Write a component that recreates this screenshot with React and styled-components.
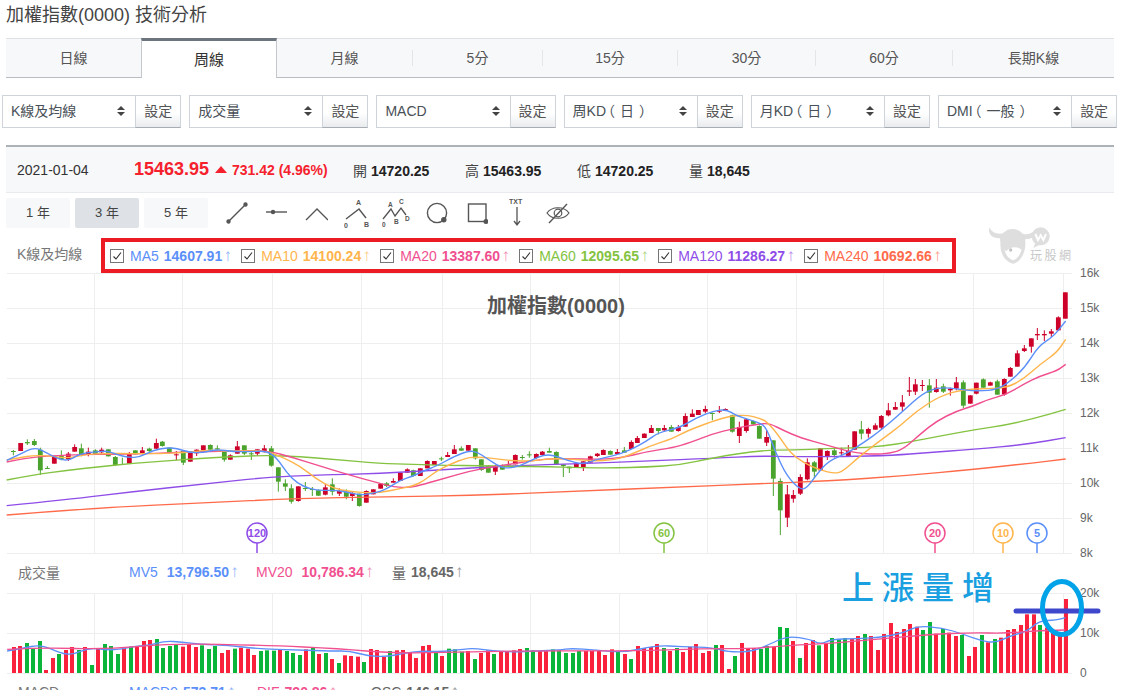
import React from 'react'
import styled, { createGlobalStyle } from 'styled-components'

const GlobalStyle = createGlobalStyle`
  html, body { margin: 0; padding: 0; background: #fff; }
  body { font-family: "Liberation Sans", "Noto Sans CJK TC", sans-serif; color: #444; }
`

const MA = { 5: '#5b8ff9', 10: '#ffb54c', 20: '#f0508f', 60: '#84c341', 120: '#8f4de8', 240: '#ff6b4a' }

const Page = styled.div`
  position: relative;
  width: 1121px;
  height: 690px;
  overflow: hidden;
`

const Title = styled.h1`
  margin: 0;
  height: 38px;
  padding: 2px 0 0 6px;
  box-sizing: border-box;
  font-size: 18px;
  line-height: 26px;
  font-weight: 400;
  color: #444;
`

const Tabs = styled.div`
  display: grid;
  grid-template-columns: 135px 136px 136px 130px 135px 138px 137px 161px;
  margin-left: 6px;
  width: 1108px;
  height: 40px;
`

const Tab = styled.div`
  display: flex;
  align-items: center;
  box-sizing: border-box;
  font-size: ${p => (p.$active ? '15px' : '14px')};
  padding-top: ${p => (p.$active ? '1px' : '0')};
  font-weight: 400;
  color: ${p => (p.$active ? '#333' : '#555')};
  background: ${p => (p.$active ? '#fff' : '#f7f8fa')};
  border-top: ${p => (p.$active ? '3px solid #6c757d' : '1px solid #dee2e6')};
  border-bottom: ${p => (p.$active ? '0' : '1px solid #b9bdc2')};
  border-left: ${p => (p.$active ? '1px solid #c4c8cc' : '0')};
  border-right: ${p => (p.$active ? '1px solid #c4c8cc' : '0')};
`

const TabLabel = styled.span`
  flex: 1;
  height: 16px;
  line-height: 16px;
  text-align: center;
  border-right: ${p => (p.$sep ? '1px solid #e4e6e9' : '0')};
`

const Selects = styled.div`
  display: grid;
  grid-template-columns: repeat(6, 179.2px);
  column-gap: 8px;
  margin: 17px 0 0 2px;
`

const SelectGroup = styled.div`
  display: flex;
  height: 33px;
  box-sizing: border-box;
  font-size: 14px;
  line-height: 14px;
  color: #495057;
`

const SelectBox = styled.div`
  flex: 1;
  display: flex;
  align-items: center;
  justify-content: space-between;
  box-sizing: border-box;
  padding: 0 10px 1px 8px;
  white-space: nowrap;
  border: 1px solid #ced4da;
  border-right: 0;
`

const Paren = styled.span`
  margin-left: ${p => (p.$open ? '-5px' : '5px')};
  margin-right: ${p => (p.$open ? '5px' : '-5px')};
`

const SetButton = styled.div`
  width: 46px;
  display: flex;
  align-items: center;
  justify-content: center;
  box-sizing: border-box;
  padding-bottom: 1px;
  color: #555;
  border: 1px solid #ced4da;
  border-bottom-color: #a8adb3;
  background: linear-gradient(#fff 55%, #e9ebee);
`

const Updown = styled.span`
  display: flex;
  flex-direction: column;
  gap: 2px;
  &::before, &::after {
    content: "";
    border-left: 4px solid transparent;
    border-right: 4px solid transparent;
  }
  &::before { border-bottom: 4px solid #444; }
  &::after { border-top: 4px solid #444; }
`

const InfoBar = styled.div`
  display: flex;
  align-items: center;
  margin: 17px 0 0 6px;
  width: 1108px;
  height: 48px;
  box-sizing: border-box;
  padding-left: 11px;
  background: #f7f8fa;
  border-top: 2px solid #adb2b8;
  border-bottom: 1px solid #e8eaed;
  font-size: 13px;
  color: #333;
`

const DateText = styled.span`
  width: 117px;
  font-size: 14px;
`

const Price = styled.span`
  font-size: 18px;
  font-weight: 700;
  color: #f5222d;
  width: 81px;
`

const UpTriangle = styled.span`
  width: 0;
  height: 0;
  margin-right: 5px;
  border-left: 6px solid transparent;
  border-right: 6px solid transparent;
  border-bottom: 7px solid #f5222d;
`

const Delta = styled.span`
  width: 121px;
  font-size: 14px;
  font-weight: 700;
  color: #f5222d;
`

const Stat = styled.span`
  width: 112px;
  font-size: 14px;
  color: #444;
  b { color: #222; margin-left: 4px; }
`

const ToolRow = styled.div`
  display: flex;
  align-items: center;
  height: 30px;
  margin: 5px 0 0 6px;
`

const YearButton = styled.div`
  width: 64px;
  height: 30px;
  margin-right: 5px;
  line-height: 30px;
  text-align: center;
  border-radius: 2px;
  font-size: 13px;
  color: #444;
  background: ${p => (p.$active ? '#dee2e6' : '#f7f8fa')};
`

const ToolIcons = styled.div`
  display: flex;
  margin-left: 13px;
`

const ToolSvg = styled.svg`
  display: block;
  width: ${p => p.$w}px;
  height: 30px;
  margin-right: ${p => p.$gap}px;
  fill: none;
  stroke: #555;
  stroke-width: 1.4;
`

const LegendRow = styled.div`
  display: flex;
  margin-top: 10px;
  height: 35px;
`

const RowLabel = styled.div`
  width: 101px;
  padding-left: 17px;
  box-sizing: border-box;
  font-size: 14px;
  line-height: 32px;
  color: #777;
`

const RedBox = styled.div`
  display: flex;
  align-items: center;
  gap: 9px;
  width: 855px;
  box-sizing: border-box;
  padding-left: 5px;
  border: 4px solid #ed1c24;
`

const Item = styled.span`
  display: inline-flex;
  align-items: center;
  font-size: 14px;
  white-space: nowrap;
  color: ${p => p.$c};
  b { margin-left: 5px; }
`

const Arrow = styled.i`
  display: inline-block;
  width: 9px;
  margin-left: 1px;
  font-style: normal;
  font-size: 17px;
  line-height: 14px;
  text-align: center;
  opacity: .65;
`

const Check = styled.span`
  display: inline-flex;
  width: 14px;
  height: 14px;
  margin-right: 6px;
  box-sizing: border-box;
  border: 1px solid #767676;
  background: #fff;
  svg { width: 12px; height: 12px; fill: none; stroke: #333; stroke-width: 1.1; }
`

const Watermark = styled.svg`
  position: absolute;
  left: 980px;
  top: 218px;
  width: 100px;
  height: 54px;
`

const WatermarkText = styled.span`
  position: absolute;
  left: 1030px;
  top: 249px;
  font-size: 12px;
  line-height: 14px;
  letter-spacing: 2.5px;
  color: #c8c8c8;
`

const ChartSvg = styled.svg`
  display: block;
  overflow: visible;
  font-family: "Liberation Sans", "Noto Sans CJK TC", sans-serif;
`

const PaneHeader = styled.div`
  display: flex;
  align-items: center;
  box-sizing: border-box;
  height: 40px;
  padding-bottom: 2px;
  font-size: 14px;
`

const PaneName = styled.div`
  width: 129px;
  padding-left: 18px;
  box-sizing: border-box;
  color: #777;
`

const PaneItem = styled(Item)`
  width: ${p => p.$w}px;
  b { margin-left: ${p => p.$gap || 5}px; }
`

const Annotation = styled.div`
  position: absolute;
  left: 842px;
  top: 565px;
  font-family: "Noto Sans CJK TC", sans-serif;
  font-weight: 500;
  font-size: 32px;
  line-height: 40px;
  letter-spacing: 8px;
  color: #1a9fe0;
`

const Marks = styled.svg`
  position: absolute;
  left: 1005px;
  top: 570px;
  width: 104px;
  height: 76px;
  fill: none;
`

// 圖上的座標：x 線性換算，y 用畫面像素
const candleSets = [
  { ox: 0, oy: 400, rows: `g 40 147 150 151 163|r 62 126 126 150 150|g 82 115 123 127 132|g 103 114 120 132 135|g 121 140 146 208 222|g 142 195 201 202 203|r 163 165 165 188 188|g 184 148 162 175 178|r 205 153 158 174 180|r 224 130 138 152 152|g 244 128 142 160 166|r 265 140 152 162 166|g 286 145 148 160 162|r 305 140 146 154 158|g 325 145 145 166 166|g 346 165 168 192 195|g 367 170 189 190 192|r 388 153 158 188 189|g 406 148 148 160 160|r 427 138 148 158 160|g 448 140 143 150 155|r 469 113 126 143 144|g 487 120 122 135 137|g 508 140 140 155 158|r 529 150 160 161 178|g 550 150 150 185 192|r 571 155 155 182 182|r 590 145 146 157 165|r 610 133 133 148 148|g 631 130 132 146 150|g 652 133 142 143 150|g 673 150 153 176 182|r 691 160 163 176 176|r 712 120 136 158 158|g 733 133 133 158 162|g 754 150 157 159 177|r 772 145 145 158 165|r 793 132 142 150 155|g 814 135 142 194 197|g 835 199 199 242 272|g 856 235 247 257 270|g 874 250 262 302 308|r 895 256 256 300 302|g 916 243 261 263 270|g 937 258 264 266 285|g 955 265 268 284 285|r 976 248 259 281 283|g 997 232 250 272 283|r 1018 262 270 278 285|g 1039 265 273 287 295|r 1057 272 276 285 300|g 1078 278 278 315 317|r 1099 268 270 305 305|r 1120 265 265 280 280` },
  { ox: 380, oy: 380, rows: `r 2 308 308 323 323|g 20 303 307 315 318|r 40 292 300 305 305|r 61 275 275 300 300|r 82 262 265 275 275|g 100 266 268 285 287|r 121 262 262 285 285|r 142 238 240 262 262|r 163 240 240 252 252|g 184 227 232 234 240|r 203 213 222 228 228|r 223 192 205 219 219|g 244 196 202 209 209|r 265 192 192 209 209|g 286 202 202 232 236|g 304 235 235 267 270|g 325 252 255 275 275|r 346 252 255 272 282|g 367 250 253 266 266|r 385 240 250 252 258|r 406 220 222 250 250|g 427 222 228 230 236|g 448 211 220 222 230|r 469 217 219 231 233|r 487 210 212 222 222|g 508 200 210 215 215|g 529 211 213 250 250|g 550 250 250 255 288|g 568 257 257 262 276|r 589 247 247 258 258|r 610 241 241 258 270|r 631 224 226 245 245|r 652 216 218 225 228|r 670 205 207 222 222|g 691 208 210 221 221|r 712 204 213 219 219|g 733 198 208 215 215|r 754 178 183 204 204|r 772 165 171 186 186|r 793 157 158 171 171|r 814 132 141 156 156|g 835 141 141 150 160|r 853 132 141 148 152|g 874 132 138 152 152|r 895 132 138 150 152|r 916 97 105 137 137|r 937 85 98 108 108|r 955 87 87 102 102|r 976 74 84 92 97|g 997 95 96 98 118|r 1018 75 89 92 96|r 1036 82 84 90 90|g 1057 101 103 152 155|r 1078 122 138 165 186|r 1099 113 115 150 155|g 1120 118 120 130 132|g 1138 133 135 173 173` },
  { ox: 760, oy: 270, rows: `r 20 478 498 515 525|g 40 508 508 623 675|g 61 622 630 718 792|r 82 642 670 740 768|r 100 657 672 683 695|r 121 610 618 668 672|r 142 562 574 625 628|g 163 570 574 602 622|r 181 532 532 598 598|r 202 538 540 556 567|g 223 530 538 552 560|r 244 530 544 546 555|r 265 522 540 555 558|r 284 481 481 536 536|g 304 450 475 488 505|r 325 470 474 488 500|r 346 457 463 476 476|r 364 432 435 470 476|r 385 396 418 433 436|r 406 393 408 416 416|r 427 372 394 407 420|r 448 318 358 362 375|r 466 324 340 362 372|r 487 327 342 344 360|g 508 324 343 365 410|r 529 324 350 363 365|g 550 338 346 362 366|r 571 350 353 358 374|r 589 318 334 353 358|g 610 328 334 404 411|r 631 373 373 398 398|r 649 335 335 368 370|g 670 322 325 350 350|r 691 332 334 344 344|g 712 326 331 371 371|r 733 322 324 370 374|r 751 288 291 317 317|r 772 238 247 287 287|r 793 222 232 240 243|r 814 202 202 227 245|r 832 171 189 193 207|r 853 178 189 193 210|r 874 174 181 188 198|r 895 136 139 178 180|r 916 64 64 143 143` }
]

const candles = candleSets.flatMap(({ ox, oy, rows }) =>
  rows.split('|').map(row => {
    const [c, x, a, b, d, e] = row.split(' ')
    return {
      up: c === 'r',
      x: ox + x / 3,
      hi: oy + a / 3,
      top: oy + b / 3,
      bot: oy + d / 3,
      lo: oy + e / 3
    }
  })
)

const pts = (ox, oy, list, sx = 3) => list.map(([x, y]) => [ox + x / sx, oy + y / 3])

const priceLines = [
  { c: MA[240], p: [...pts(0, 400, [[20, 342], [300, 320], [600, 306], [900, 292], [1140, 288]]), ...pts(380, 380, [[300, 343], [600, 330], [900, 318], [1140, 308]]), ...pts(760, 270, [[200, 630], [430, 615], [640, 595], [800, 578], [917, 564]])] },
  { c: MA[120], p: [...pts(0, 400, [[20, 314], [200, 296], [400, 272], [600, 250], [800, 229], [950, 222], [1140, 218]]), ...pts(380, 380, [[200, 265], [400, 254], [600, 248], [800, 240], [1000, 232], [1140, 225]]), ...pts(760, 270, [[100, 557], [250, 557], [400, 553], [500, 545], [640, 535], [800, 520], [917, 500]])] },
  { c: MA[60], p: [...pts(0, 400, [[20, 237], [100, 222], [200, 208], [300, 197], [400, 187], [500, 180], [600, 172], [700, 167], [800, 163], [900, 167], [1000, 175], [1140, 187]]), ...pts(380, 380, [[100, 250], [200, 253], [300, 254], [400, 256], [500, 257], [600, 260], [700, 261], [800, 258], [900, 252], [1000, 230], [1140, 208]]), ...pts(760, 270, [[100, 537], [200, 533], [300, 530], [370, 525], [450, 513], [550, 493], [650, 475], [750, 460], [850, 435], [917, 415]])] },
  { c: MA[20], p: [...pts(0, 400, [[20, 183], [80, 170], [150, 165], [250, 160], [330, 160], [430, 158], [560, 153], [700, 150], [800, 148], [880, 170], [960, 195], [1040, 220], [1140, 247]]), ...pts(380, 380, [[40, 318], [90, 320], [130, 310], [200, 290], [270, 270], [340, 257], [420, 245], [500, 233], [570, 233], [640, 235], [720, 232], [800, 212], [880, 200], [930, 185], [1000, 158], [1060, 143], [1140, 128]]), ...pts(760, 270, [[30, 458], [70, 478], [120, 500], [200, 522], [280, 545], [340, 550], [390, 547], [430, 535], [480, 490], [530, 450], [590, 420], [640, 405], [680, 387], [740, 370], [790, 340], [840, 315], [890, 300], [917, 280]])] },
  { c: MA[10], p: [...pts(0, 400, [[20, 177], [60, 170], [100, 163], [150, 165], [200, 172], [260, 160], [320, 157], [400, 158], [480, 158], [550, 155], [620, 147], [680, 150], [740, 150], [800, 150], [850, 170], [900, 195], [950, 235], [1000, 262], [1050, 272], [1100, 275], [1140, 275]]), ...pts(380, 380, [[50, 325], [100, 315], [130, 300], [170, 270], [210, 250], [260, 230], [300, 228], [350, 233], [400, 240], [460, 240], [520, 232], [580, 235], [640, 240], [700, 238], [750, 222], [810, 195], [880, 172], [920, 150], [1000, 120], [1050, 105], [1100, 102], [1140, 112]]), ...pts(760, 270, [[20, 452], [50, 485], [90, 545], [130, 575], [180, 597], [225, 608], [250, 600], [300, 555], [370, 502], [420, 465], [470, 420], [540, 375], [610, 355], [680, 353], [740, 350], [790, 325], [840, 280], [890, 245], [917, 205]])] },
  { c: MA[5], p: [...pts(0, 400, [[20, 178], [60, 160], [103, 138], [140, 155], [170, 172], [205, 180], [240, 158], [290, 152], [320, 150], [350, 160], [385, 170], [420, 168], [460, 148], [500, 140], [530, 142], [570, 155], [610, 155], [650, 145], [700, 152], [750, 152], [800, 150], [830, 170], [860, 215], [890, 245], [930, 265], [970, 268], [1010, 268], [1050, 275], [1080, 282], [1110, 278], [1140, 272]]), ...pts(380, 380, [[30, 318], [60, 298], [100, 285], [130, 270], [170, 255], [225, 225], [265, 210], [290, 212], [320, 232], [360, 258], [385, 262], [420, 255], [460, 235], [490, 222], [520, 222], [560, 238], [610, 250], [650, 235], [700, 225], [750, 208], [800, 180], [835, 155], [900, 140], [950, 110], [1000, 90], [1040, 85], [1070, 105], [1140, 125]]), ...pts(760, 270, [[20, 472], [45, 540], [80, 615], [120, 655], [140, 652], [170, 610], [205, 570], [265, 545], [310, 515], [360, 480], [430, 420], [490, 365], [540, 348], [600, 355], [640, 360], [700, 358], [740, 340], [795, 290], [835, 225], [880, 197], [917, 150]])] }
]

const volLines = [
  { c: MA[5], p: [...pts(0, 555, [[20, 285], [60, 278], [115, 265], [170, 292], [205, 296], [250, 275], [300, 282], [340, 280], [380, 270], [420, 268], [460, 255], [510, 258], [560, 265], [640, 268], [720, 278], [830, 282], [930, 285], [980, 285], [1030, 300], [1085, 302], [1130, 292], [1180, 285], [1240, 287], [1290, 280], [1330, 277], [1380, 285], [1440, 288], [1500, 285]], 2.8), ...pts(560, 555, [[0, 282], [30, 277], [100, 282], [180, 290], [270, 268], [340, 272], [430, 275], [470, 288], [540, 287], [600, 258], [640, 240], [700, 250], [730, 265], [760, 250], [830, 248], [890, 245], [960, 232], [1000, 210], [1070, 215], [1130, 235], [1180, 255], [1220, 260], [1260, 240], [1310, 225], [1340, 195], [1390, 192], [1415, 185]], 2.8)] },
  { c: MA[20], p: [...pts(0, 555, [[20, 280], [120, 275], [300, 280], [480, 262], [750, 268], [950, 278], [1100, 292], [1300, 288], [1500, 284]], 2.8), ...pts(560, 555, [[200, 285], [400, 278], [540, 278], [640, 268], [760, 262], [880, 250], [1040, 235], [1150, 230], [1250, 232], [1320, 225], [1415, 222]], 2.8)] }
]

const volLeft = 'R273 R270 G261 G277 G255 R342 R306 G294 R282 R273 G282 R273 G327 R276 G264 G270 G294 R276 G272 R273 R255 R252 G249 G276 G270 G266 R272 R265 R273 G268 G279 G270 R291 R282 G278 R275 R278 R297 G285 G283 G284 R281 G285 G291 G297 R280 G273 R294 G291 R309 G321 R298 R300 R302 G318 R279 R282 R303 G285 R283 R282 R288 R306 R270 R267 G285 R300 G278 G280 G287 R285 G309 R291 R283 G294 R287 R285 R283 R279 G276 G283 R285 R285 G280 G283'.split(' ')
const volRight = 'G291 G291 G285 R285 R285 R285 R297 R280 G288 R294 G309 R270 R276 R273 R264 G276 R285 G276 R288 R273 R264 R291 R285 G267 R267 R339 G300 R261 R276 R276 G279 G270 R273 G213 G216 R255 G306 R261 R252 G268 R264 G246 G250 G246 R249 R240 G234 R240 R282 R234 R201 R228 R219 R204 R212 G222 G198 R233 G219 R230 R240 G237 R300 R273 G237 R259 G249 R245 R222 R219 R207 R175 R175 G207 R215 R225 R236 R129'.split(' ')

const parseBar = (s, x) => ({ up: s[0] === 'R', x, top: 555 + Number(s.slice(1)) / 3 })
const volBars = [
  ...volLeft.map((s, i) => parseBar(s, 14 + i * 6.49)),
  ...volRight.map((s, i) => parseBar(s, 1066 - (volRight.length - 1 - i) * 6.49))
]

const gridX = [94, 182, 272, 361, 442, 530, 619, 707, 796, 883, 973, 1063]

const smooth = p => {
  let d = `M${p[0][0]} ${p[0][1]}`
  for (let i = 1; i < p.length - 1; i++) {
    const mx = (p[i][0] + p[i + 1][0]) / 2
    const my = (p[i][1] + p[i + 1][1]) / 2
    d += `Q${p[i][0]} ${p[i][1]} ${mx} ${my}`
  }
  const last = p[p.length - 1]
  return `${d}L${last[0]} ${last[1]}`
}

function Grid({ top, bottom, rows }) {
  return (
    <g stroke="#eeeeee" strokeWidth="1" shapeRendering="crispEdges">
      {rows.map(y => <line key={y} x1="7" x2="1072" y1={y} y2={y} />)}
      {gridX.map(x => <line key={x} x1={x} x2={x} y1={top} y2={bottom} />)}
    </g>
  )
}

function AxisLabels({ items }) {
  return items.map(([label, y]) => (
    <text key={label} x="1080" y={y + 4} fontSize="12" fill="#666">{label}</text>
  ))
}

function Pin({ x, label, color }) {
  return (
    <g>
      <line x1={x} x2={x} y1="542" y2="552" stroke={color} strokeWidth="1.5" />
      <circle cx={x} cy="532" r="10" fill="#fff" stroke={color} strokeWidth="1.5" />
      <text x={x} y="536" textAnchor="middle" fontSize="11" fontWeight="700" fill={color}>{label}</text>
    </g>
  )
}

function PriceChart() {
  const rows = [272, 307, 342, 377, 412, 447, 482, 517, 552]
  return (
    <ChartSvg width="1121" height="280" viewBox="0 272 1121 280">
      <Grid top={272} bottom={552} rows={rows} />
      {candles.map((c, i) => {
        const color = c.up ? '#cc0029' : '#4aa32c'
        return (
          <g key={i}>
            <line x1={c.x} x2={c.x} y1={c.hi} y2={c.lo} stroke={color} strokeWidth="1" />
            <rect x={c.x - 2.4} y={c.top} width="4.8" height={Math.max(c.bot - c.top, 1)} fill={color} />
          </g>
        )
      })}
      {priceLines.map(l => (
        <path key={l.c} d={smooth(l.p)} fill="none" stroke={l.c} strokeWidth="1.4" />
      ))}
      <text x="556" y="312" textAnchor="middle" fontSize="20" fontWeight="700" fill="#555">加權指數(0000)</text>
      <Pin x={257} label="120" color={MA[120]} />
      <Pin x={664} label="60" color={MA[60]} />
      <Pin x={935} label="20" color={MA[20]} />
      <Pin x={1003} label="10" color={MA[10]} />
      <Pin x={1037} label="5" color={MA[5]} />
      <AxisLabels items={[['16k', 272], ['15k', 307], ['14k', 342], ['13k', 377], ['12k', 412], ['11k', 447], ['10k', 482], ['9k', 517], ['8k', 552]]} />
    </ChartSvg>
  )
}

function VolumeChart() {
  return (
    <ChartSvg width="1121" height="80" viewBox="0 592 1121 80">
      <Grid top={592} bottom={672} rows={[592, 632, 672]} />
      {volBars.map((b, i) => (
        <rect key={i} x={Math.round(b.x - 2)} y={b.top} width="4" height={672 - b.top} fill={b.up ? '#f9213b' : '#0ab53a'} />
      ))}
      {volLines.map(l => (
        <path key={l.c} d={smooth(l.p)} fill="none" stroke={l.c} strokeWidth="1.3" />
      ))}
      <AxisLabels items={[['20k', 592], ['10k', 632], ['0', 672]]} />
    </ChartSvg>
  )
}

const tabs = [
  ['日線'], ['周線', false, true], ['月線', true], ['5分', true], ['15分', true], ['30分', true], ['60分', true], ['長期K線']
]
const selects = [
  ['K線及均線'], ['成交量'], ['MACD'], ['周KD', '日'], ['月KD', '日'], ['DMI', '一般']
]
const legend = [
  ['MA5', '14607.91', 5], ['MA10', '14100.24', 10], ['MA20', '13387.60', 20],
  ['MA60', '12095.65', 60], ['MA120', '11286.27', 120], ['MA240', '10692.66', 240]
]

function LineTools() {
  return (
    <ToolIcons>
      <ToolSvg $w={22} $gap={17} viewBox="0 0 22 30">
        <path d="M2 24L20 6" />
        <circle cx="2.5" cy="23.5" r="1.5" fill="#555" />
        <circle cx="19.5" cy="6.5" r="1.5" fill="#555" />
      </ToolSvg>
      <ToolSvg $w={23} $gap={17} viewBox="0 0 23 30">
        <path d="M1 14H22" />
        <circle cx="8" cy="14" r="1.5" fill="#555" />
      </ToolSvg>
      <ToolSvg $w={23} $gap={16} viewBox="0 0 23 30">
        <path d="M1 22L12 11L23 22" />
      </ToolSvg>
      <ToolSvg $w={26} $gap={12} viewBox="0 0 26 30">
        <path d="M2 21L15 11L22 20" />
        <g fill="#555" stroke="none" fontSize="7" fontFamily="Liberation Sans" fontWeight="700">
          <text x="12" y="7">A</text>
          <text x="0" y="30">0</text>
          <text x="20" y="29">B</text>
        </g>
      </ToolSvg>
      <ToolSvg $w={30} $gap={14} viewBox="0 0 30 30">
        <path d="M1 21L9 11L13 18L19 10L24 17" strokeWidth="1.3" />
        <g fill="#555" stroke="none" fontSize="6.5" fontFamily="Liberation Sans" fontWeight="700">
          <text x="6" y="9">A</text>
          <text x="17" y="6">C</text>
          <text x="23" y="23">D</text>
          <text x="12" y="26">B</text>
          <text x="0" y="29">0</text>
        </g>
      </ToolSvg>
      <ToolSvg $w={22} $gap={19} viewBox="0 0 22 30">
        <circle cx="11" cy="15" r="9.6" />
        <circle cx="17.8" cy="21.8" r="2" fill="#555" />
      </ToolSvg>
      <ToolSvg $w={21} $gap={21} viewBox="0 0 21 30">
        <rect x="1.5" y="6" width="17.5" height="17.5" />
        <circle cx="19" cy="23.5" r="1.8" fill="#555" />
      </ToolSvg>
      <ToolSvg $w={16} $gap={21} viewBox="0 0 16 30">
        <text x="0" y="6" fontSize="7" fontWeight="700" fontFamily="Liberation Sans" fill="#555" stroke="none">TXT</text>
        <path d="M8 9V27M5 23L8 27L11 23" strokeWidth="1.3" />
      </ToolSvg>
      <ToolSvg $w={24} $gap={0} viewBox="0 0 24 30">
        <path d="M1 15C6 8 18 8 23 15C18 22 6 22 1 15Z" strokeWidth="1.2" />
        <circle cx="12" cy="15" r="3.8" strokeWidth="1.2" />
        <path d="M3 25L21 6" strokeWidth="1.4" />
      </ToolSvg>
    </ToolIcons>
  )
}

export default function App() {
  return (
    <Page>
      <GlobalStyle />
      <Title>加權指數(0000) 技術分析</Title>
      <Tabs>
        {tabs.map(([name, sep, active]) => (
          <Tab key={name} $active={active}>
            <TabLabel $sep={sep}>{name}</TabLabel>
          </Tab>
        ))}
      </Tabs>
      <Selects>
        {selects.map(([name, note]) => (
          <SelectGroup key={name}>
            <SelectBox>
              <span>
                {name}
                {note && <><Paren $open>（</Paren>{note}<Paren>）</Paren></>}
              </span>
              <Updown />
            </SelectBox>
            <SetButton>設定</SetButton>
          </SelectGroup>
        ))}
      </Selects>
      <InfoBar>
        <DateText>2021-01-04</DateText>
        <Price>15463.95</Price>
        <UpTriangle />
        <Delta>731.42 (4.96%)</Delta>
        <Stat>開<b>14720.25</b></Stat>
        <Stat>高<b>15463.95</b></Stat>
        <Stat>低<b>14720.25</b></Stat>
        <Stat>量<b>18,645</b></Stat>
      </InfoBar>
      <ToolRow>
        <YearButton>1 年</YearButton>
        <YearButton $active>3 年</YearButton>
        <YearButton>5 年</YearButton>
        <LineTools />
      </ToolRow>
      <LegendRow>
        <RowLabel>K線及均線</RowLabel>
        <RedBox>
          {legend.map(([name, value, key]) => (
            <Item key={name} $c={MA[key]}>
              <Check><svg viewBox="0 0 12 12"><path d="M2.5 6.5L5 9L10 2.5" /></svg></Check>
              {name}<b>{value}</b><Arrow>↑</Arrow>
            </Item>
          ))}
        </RedBox>
      </LegendRow>
      <Watermark viewBox="0 0 300 162">
        <g fill="#dedede">
          <path d="M28 28C22 50 40 64 64 60L72 46C52 50 36 45 28 28Z" />
          <path d="M167 32C172 52 156 66 134 62L126 48C146 50 158 46 167 32Z" />
          <path d="M62 72C58 104 74 132 100 137C122 132 138 102 136 72Z" />
          <circle cx="182" cy="55" r="27" />
          <path d="M166 74L160 90L180 80Z" />
        </g>
        <path d="M72 78C70 100 82 122 100 127C114 122 128 100 126 80Z" fill="#fff" />
        <path d="M60 62C72 24 122 24 136 60C138 72 132 88 126 96C112 84 92 84 78 100C68 90 60 76 60 62Z" fill="#dedede" />
        <circle cx="92" cy="96" r="5" fill="#c4c4c4" />
        <path d="M166 48L174 66L182 52L190 66L198 48" fill="none" stroke="#fff" strokeWidth="6" />
      </Watermark>
      <WatermarkText>玩股網</WatermarkText>
      <PriceChart />
      <PaneHeader>
        <PaneName>成交量</PaneName>
        <PaneItem $c={MA[5]} $w={127} $gap={9}>MV5<b>13,796.50</b><Arrow>↑</Arrow></PaneItem>
        <PaneItem $c={MA[20]} $w={136} $gap={9}>MV20<b>10,786.34</b><Arrow>↑</Arrow></PaneItem>
        <PaneItem $c="#666" $w={100}>量<b>18,645</b><Arrow>↑</Arrow></PaneItem>
      </PaneHeader>
      <VolumeChart />
      <PaneHeader>
        <PaneName>MACD</PaneName>
        <PaneItem $c={MA[5]} $w={128}>MACD9<b>573.71</b><Arrow>↑</Arrow></PaneItem>
        <PaneItem $c={MA[20]} $w={114}>DIF<b>720.86</b><Arrow>↑</Arrow></PaneItem>
        <PaneItem $c="#666" $w={110}>OSC<b>146.15</b><Arrow>↑</Arrow></PaneItem>
      </PaneHeader>
      <Annotation>上漲量增</Annotation>
      <Marks viewBox="0 0 104 76">
        <line x1="11" x2="93" y1="41" y2="41" stroke="#3f48cc" strokeWidth="5" strokeLinecap="round" />
        <ellipse cx="57" cy="38" rx="19.5" ry="26.5" stroke="#00a2e8" strokeWidth="5" />
      </Marks>
    </Page>
  )
}
